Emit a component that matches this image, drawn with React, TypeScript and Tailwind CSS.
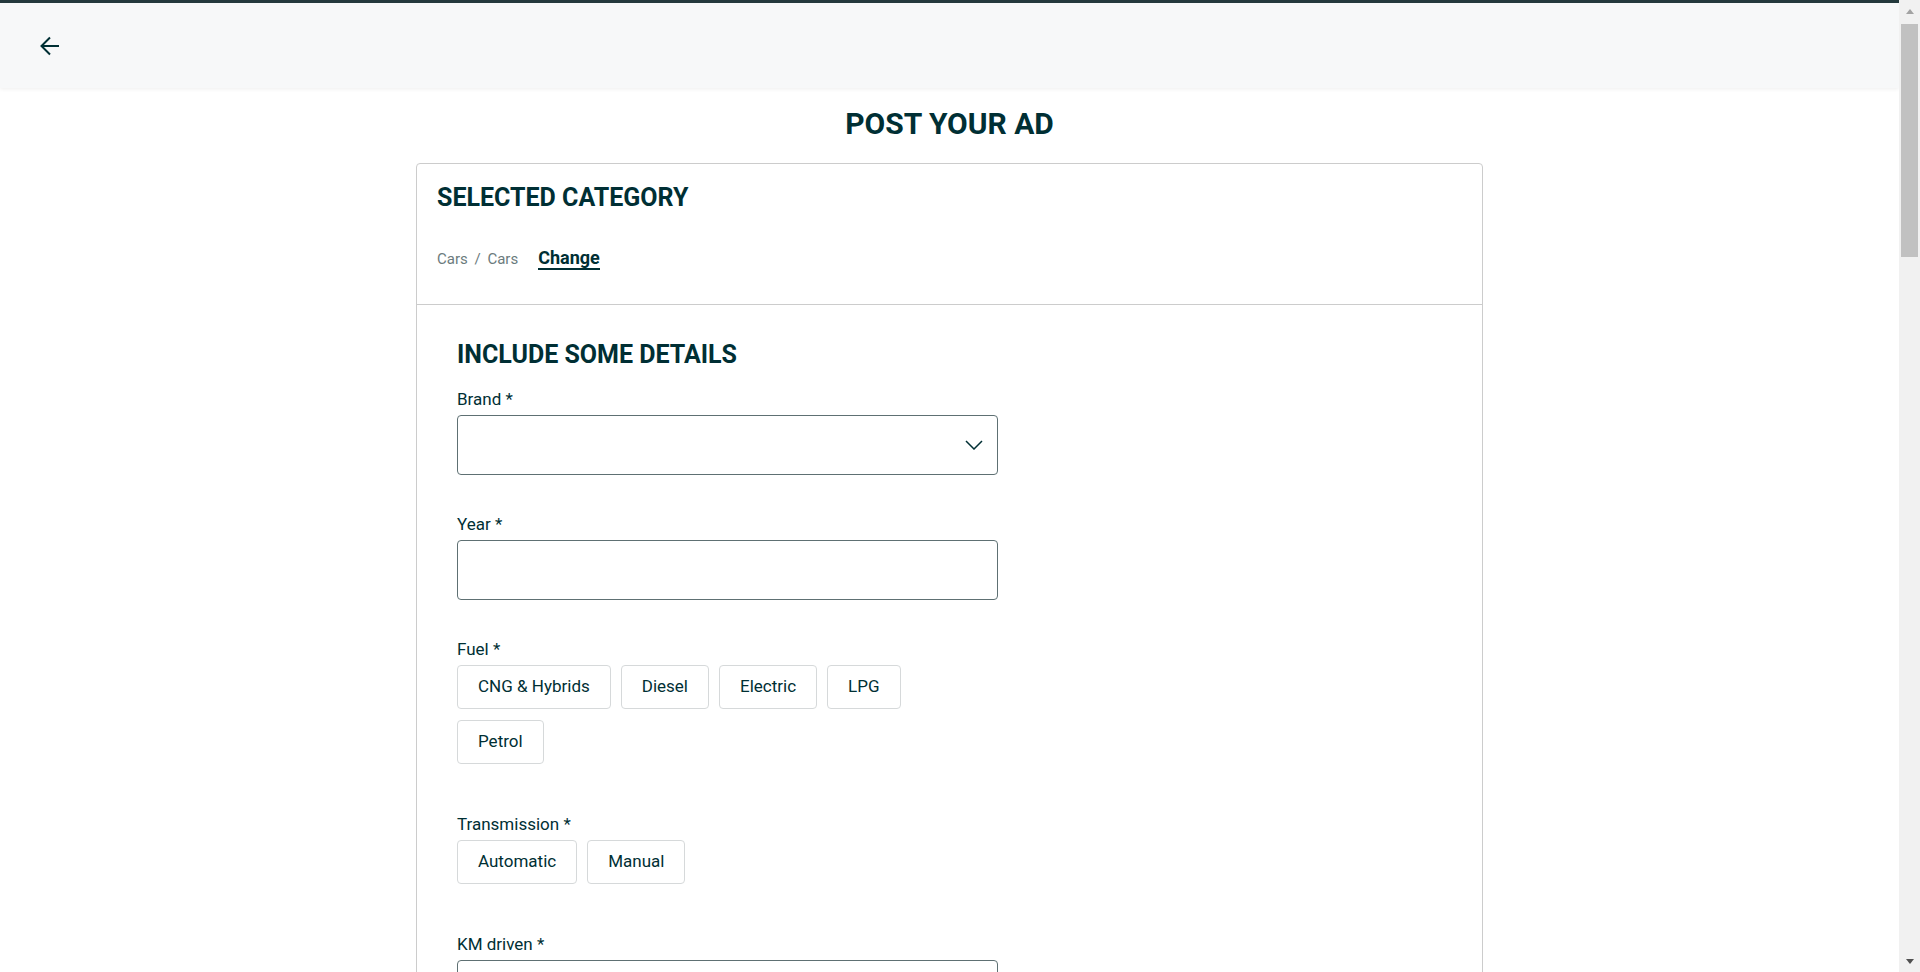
import React from "react";

const fuels = ["CNG & Hybrids", "Diesel", "Electric", "LPG", "Petrol"];
const transmissions = ["Automatic", "Manual"];

function Label({ children }: { children: React.ReactNode }) {
  return (
    <label className="mb-[4px] block text-[17px] leading-[24px] text-[#002f34]">
      {children}
    </label>
  );
}

function TextField({ label }: { label: string }) {
  return (
    <div className="mb-[37px]">
      <Label>{label}</Label>
      <input
        type="text"
        className="block h-[60px] w-[541px] rounded-[4px] border border-[#5e7073] bg-white px-3 text-[17px] text-[#002f34] outline-none"
      />
    </div>
  );
}

function ChipField({ label, options }: { label: string; options: string[] }) {
  return (
    <div className="mb-[37px]">
      <Label>{label}</Label>
      <div className="flex w-[541px] flex-wrap">
        {options.map((o) => (
          <button
            key={o}
            type="button"
            className="mb-[11px] mr-[10px] h-[44px] rounded-[4px] border border-[#d6d9da] bg-white px-[20px] text-[17px] text-[#002f34]"
          >
            {o}
          </button>
        ))}
      </div>
    </div>
  );
}

// page scrollbar as it shows in the screenshot
function Scrollbar() {
  return (
    <div className="flex h-full w-[21px] shrink-0 flex-col items-center bg-[#f1f1f1]">
      <div className="flex h-[22px] w-full items-center justify-center">
        <div className="h-0 w-0 border-b-[5px] border-l-[4.5px] border-r-[4.5px] border-b-[#a3a3a3] border-l-transparent border-r-transparent" />
      </div>
      <div className="mt-[2px] h-[233px] w-[17px] bg-[#c1c1c1]" />
      <div className="flex-1" />
      <div className="flex h-[22px] w-full items-center justify-center">
        <div className="h-0 w-0 border-l-[4.5px] border-r-[4.5px] border-t-[5px] border-l-transparent border-r-transparent border-t-[#505050]" />
      </div>
    </div>
  );
}

export default function App() {
  return (
    <div className="flex h-screen overflow-hidden bg-white font-['Roboto',_sans-serif] text-[#002f34]">
      <div className="min-w-0 flex-1 overflow-hidden">
        <header className="flex h-[88px] items-center border-t-[3px] border-[#24393d] bg-[#f7f8f9] pl-[40px] shadow-[0_1px_4px_rgba(0,0,0,0.07)]">
          <button type="button" className="flex h-[20px] w-[20px] items-center justify-center">
            <svg width="20" height="20" viewBox="0 0 20 20" fill="none">
              <path
                d="M1.5 10H19M10 1.5L1.5 10L10 18.5"
                stroke="#002f34"
                strokeWidth="2"
              />
            </svg>
          </button>
        </header>

        <main className="mx-auto flex w-[1067px] flex-col pb-20">
          <h1 className="mt-[16px] text-center text-[30px] font-bold leading-[40px]">
            POST YOUR AD
          </h1>

          <div className="mt-[19px] rounded-[4px] border border-[#cccccc]">
            <div className="border-b border-[#cccccc] px-[20px] pb-[34px] pt-[20px]">
              <h2 className="mb-[36px] text-[25px] font-bold leading-[28px]">
                SELECTED CATEGORY
              </h2>
              <div className="flex items-baseline gap-[20px]">
                <span className="text-[15px] leading-[20px] text-[#6b7b7d]">
                  Cars <span className="mx-[3px]">/</span> Cars
                </span>
                <span className="border-b-[2px] border-[#002f34] text-[18px] font-bold leading-[20px]">
                  Change
                </span>
              </div>
            </div>

            <div className="px-[40px] pb-[40px] pt-[36px]">
              <h2 className="mb-[18px] text-[25px] font-bold leading-[28px]">
                INCLUDE SOME DETAILS
              </h2>

              <div className="mb-[37px]">
                <Label>Brand *</Label>
                <div className="flex h-[60px] w-[541px] items-center justify-end rounded-[4px] border border-[#5e7073] bg-white pr-[14px]">
                  <svg width="18" height="10" viewBox="0 0 18 10" fill="none">
                    <polyline points="1,1 9,9 17,1" stroke="#002f34" strokeWidth="1.5" />
                  </svg>
                </div>
              </div>

              <TextField label="Year *" />
              <ChipField label="Fuel *" options={fuels} />
              <ChipField label="Transmission *" options={transmissions} />
              <TextField label="KM driven *" />
              <TextField label="Ad title *" />
              <TextField label="Describe what you are selling *" />
            </div>
          </div>
        </main>
      </div>
      <Scrollbar />
    </div>
  );
}
